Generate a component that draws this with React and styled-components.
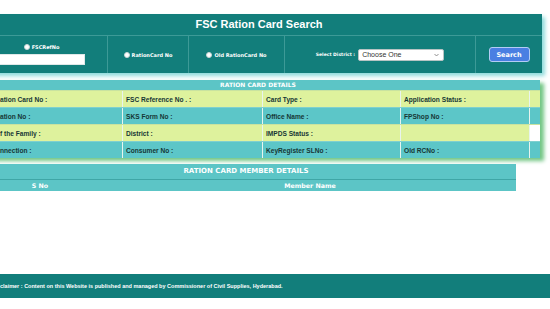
import * as React from "react"
import styled, { createGlobalStyle } from "styled-components"

const GlobalStyle = createGlobalStyle`
  html, body {
    margin: 0;
    padding: 0;
    background: #ffffff;
    overflow: hidden;
  }
  body {
    font-family: "Liberation Sans", Arial, sans-serif;
  }
`

// The page is scrolled a little to the right, so the panels start off-screen.
const Page = styled.div`
  display: flex;
  flex-direction: column;
  margin-left: -24px;
  width: 620px;
  padding-top: 14px;
`

const SearchPanel = styled.div`
  background: #127e7b;
  box-shadow: 3px 3px 4px #8fdcdc;
  display: flex;
  flex-direction: column;
  width: 566px;
`

const Title = styled.h1`
  border-bottom: 1px solid #3d9a97;
  color: #ffffff;
  font-size: 11px;
  font-weight: bold;
  height: 21px;
  line-height: 21px;
  margin: 0;
  text-align: center;
`

const SearchRow = styled.div`
  display: grid;
  grid-template-columns: 131px 81px 96px 191px 67px;
  height: 37px;
`

const SearchCell = styled.div`
  align-items: center;
  border-left: ${(p) => (p.$first ? "none" : "1px solid #3d9a97")};
  display: flex;
  flex-direction: ${(p) => (p.$stack ? "column" : "row")};
  gap: ${(p) => (p.$stack ? "4px" : "2px")};
  justify-content: center;
`

const RadioLabel = styled.label`
  align-items: center;
  color: #ffffff;
  display: flex;
  font-family: "DejaVu Sans", Verdana, sans-serif;
  font-size: 5px;
  font-weight: bold;
  gap: 2px;
`

const Radio = styled.input`
  appearance: none;
  background: #ffffff;
  border: 1px solid #c9d6d6;
  border-radius: 50%;
  height: 6px;
  margin: 0;
  width: 6px;
`

const TextInput = styled.input`
  background: #ffffff;
  border: 1px solid #dfe8e8;
  box-sizing: border-box;
  height: 11px;
  margin: 0;
  padding: 0;
  width: 86px;
`

const FieldLabel = styled.span`
  color: #ffffff;
  font-family: "DejaVu Sans", Verdana, sans-serif;
  font-size: 4.5px;
  font-weight: bold;
  margin-right: 1px;
`

const SelectWrap = styled.div`
  display: flex;
  position: relative;
`

const Select = styled.select`
  appearance: none;
  background: #ffffff;
  border: 1px solid #b8c4c4;
  border-radius: 2px;
  box-sizing: border-box;
  color: #333333;
  font-family: "Liberation Sans", Arial, sans-serif;
  font-size: 7px;
  height: 12px;
  margin: 0;
  padding: 0 0 0 3px;
  width: 86px;
`

const Chevron = styled.svg`
  pointer-events: none;
  position: absolute;
  right: 5px;
  top: 4px;
`

const SearchButton = styled.button`
  background: #4a7fe2;
  border: 1px solid #b4cdf5;
  border-radius: 3px;
  box-sizing: border-box;
  color: #ffffff;
  font-family: "DejaVu Sans", Verdana, sans-serif;
  font-size: 6.5px;
  font-weight: bold;
  height: 15px;
  padding: 0;
  width: 41px;
`

const DetailsTable = styled.div`
  box-shadow: 4px 3px 4px #72c684;
  display: flex;
  flex-direction: column;
  margin-top: 7px;
  width: 564px;
`

const TableHeader = styled.div`
  background: #5cc5c6;
  color: #ffffff;
  font-family: "DejaVu Sans", Verdana, sans-serif;
  font-size: ${(p) => p.$size || "6px"};
  font-weight: bold;
  height: ${(p) => p.$height || "10px"};
  line-height: ${(p) => p.$height || "10px"};
  text-align: center;
`

const DetailRow = styled.div`
  background: ${(p) => (p.$light ? "#def29d" : "#5cc6c8")};
  border-top: 1px solid ${(p) => (p.$light ? "#c9e3a0" : "#7fd0cf")};
  display: grid;
  grid-template-columns: 146px 140px 138px 129px 11px;
  height: 16px;
`

const DetailCell = styled.div`
  align-items: center;
  background: ${(p) => (p.$blank ? "#ffffff" : "transparent")};
  border-left: ${(p) => (p.$first ? "none" : "1px solid #e8f4ee")};
  box-sizing: border-box;
  color: #163735;
  display: flex;
  font-size: 6.6px;
  font-weight: bold;
  overflow: hidden;
  padding-left: ${(p) => (p.$first ? "24px" : "3px")};
  white-space: nowrap;
`

const MemberTable = styled.div`
  background: #5cc5c6;
  display: flex;
  flex-direction: column;
  margin-top: 6px;
  width: 540px;
`

const MemberColumns = styled.div`
  border-top: 1px solid #3fa6a6;
  display: grid;
  grid-template-columns: 128px 1fr;
  height: 11px;
`

const MemberColumn = styled.div`
  color: #ffffff;
  font-family: "DejaVu Sans", Verdana, sans-serif;
  font-size: 6.3px;
  font-weight: bold;
  line-height: 11px;
  text-align: center;
`

const Footer = styled.footer`
  align-items: center;
  background: #127e7b;
  color: #ffffff;
  display: flex;
  font-family: "Liberation Sans", Arial, sans-serif;
  font-size: 5.5px;
  font-weight: bold;
  height: 24px;
  margin-top: 83px;
  padding-left: 24px;
  white-space: nowrap;
`

// Labels of the first column as they show in the scrolled view.
const rows = [
  ["ation Card No :", "FSC Reference No . :", "Card Type :", "Application Status :"],
  ["ation No :", "SKS Form No :", "Office Name :", "FPShop No :"],
  ["f the Family :", "District :", "IMPDS Status :", ""],
  ["nnection :", "Consumer No :", "KeyRegister SLNo :", "Old RCNo :"],
]

const App = () => (
  <>
    <GlobalStyle />
    <Page>
      <SearchPanel>
        <Title>FSC Ration Card Search</Title>
        <SearchRow>
          <SearchCell $first $stack>
            <RadioLabel>
              <Radio type="radio" name="searchType" />
              FSCRefNo
            </RadioLabel>
            <TextInput type="text" />
          </SearchCell>
          <SearchCell>
            <RadioLabel>
              <Radio type="radio" name="searchType" />
              RationCard No
            </RadioLabel>
          </SearchCell>
          <SearchCell>
            <RadioLabel>
              <Radio type="radio" name="searchType" />
              Old RationCard No
            </RadioLabel>
          </SearchCell>
          <SearchCell>
            <FieldLabel>Select District :</FieldLabel>
            <SelectWrap>
              <Select defaultValue="">
                <option value="">Choose One</option>
              </Select>
              <Chevron width="5" height="4" viewBox="0 0 5 4">
                <path d="M0.5 1 L2.5 3 L4.5 1" fill="none" stroke="#777" strokeWidth="0.8" />
              </Chevron>
            </SelectWrap>
          </SearchCell>
          <SearchCell>
            <SearchButton type="button">Search</SearchButton>
          </SearchCell>
        </SearchRow>
      </SearchPanel>

      <DetailsTable>
        <TableHeader>RATION CARD DETAILS</TableHeader>
        {rows.map((row, i) => (
          <DetailRow key={i} $light={i % 2 === 0}>
            {row.map((label, j) => (
              <DetailCell key={j} $first={j === 0}>
                {label}
              </DetailCell>
            ))}
            <DetailCell $blank={i === 2} />
          </DetailRow>
        ))}
      </DetailsTable>

      <MemberTable>
        <TableHeader $size="7px" $height="15px">
          RATION CARD MEMBER DETAILS
        </TableHeader>
        <MemberColumns>
          <MemberColumn>S No</MemberColumn>
          <MemberColumn>Member Name</MemberColumn>
        </MemberColumns>
      </MemberTable>

      <Footer>
        claimer : Content on this Website is published and managed by Commissioner of Civil Supplies, Hyderabad.
      </Footer>
    </Page>
  </>
)

export default App
